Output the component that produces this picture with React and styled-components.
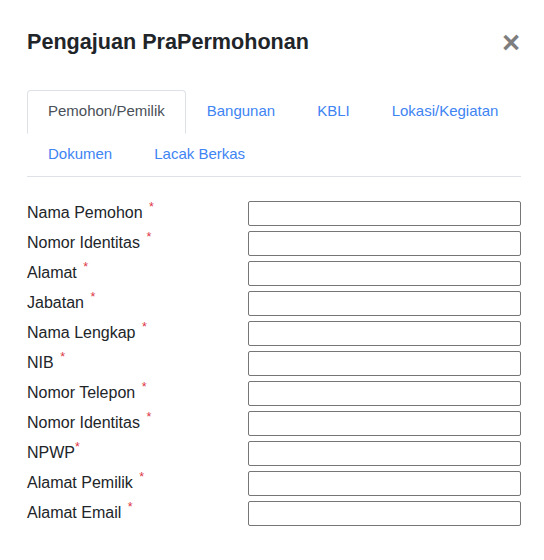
import { useState } from "react";
import styled, { createGlobalStyle } from "styled-components";

const GlobalStyle = createGlobalStyle`
  body {
    margin: 0;
    background: #fff;
    font-family: "Liberation Sans", Arial, sans-serif;
    color: #212529;
  }
`;

const Modal = styled.div`
  width: 544px;
  height: 560px;
  box-sizing: border-box;
  padding: 0 23px 0 27px;
  background: #fff;
`;

const Header = styled.div`
  display: flex;
  align-items: center;
  justify-content: space-between;
  height: 84px;
  box-sizing: border-box;
`;

const Title = styled.h5`
  margin: 0;
  font-size: 21.6px;
  font-weight: 700;
  line-height: 1.5;
  color: #212529;
`;

const CloseButton = styled.button`
  border: 0;
  background: transparent;
  padding: 0;
  margin-right: 1px;
  font-family: "Liberation Sans", Arial, sans-serif;
  font-size: 31px;
  font-weight: 700;
  line-height: 1;
  color: #000;
  opacity: 0.5;
  text-shadow: 0 1px 0 #fff;
  cursor: pointer;
`;

const Tabs = styled.ul`
  display: flex;
  flex-wrap: wrap;
  list-style: none;
  margin: 6px 0 0;
  padding: 0;
  border-bottom: 1px solid #dee2e6;
`;

const TabLink = styled.a`
  display: block;
  margin-bottom: -1px;
  padding: 9px 20px 11px;
  font-size: 15px;
  line-height: 22px;
  text-decoration: none;
  cursor: pointer;
  border: 1px solid transparent;
  border-top-left-radius: 4px;
  border-top-right-radius: 4px;
  color: ${(p) => (p.$active ? "#495057" : "#3e84f3")};
  background: ${(p) => (p.$active ? "#fff" : "transparent")};
  border-color: ${(p) =>
    p.$active ? "#dee2e6 #dee2e6 #fff" : "transparent"};
`;

const Form = styled.div`
  display: flex;
  flex-direction: column;
  gap: 5px;
  padding-top: 24px;
`;

const Row = styled.div`
  display: grid;
  grid-template-columns: 221px 1fr;
  align-items: center;
  height: 25px;
`;

const Label = styled.label`
  font-size: 16px;
  line-height: 20px;
  color: #212529;
  margin-top: -5px;
`;

const Required = styled.sup`
  color: #dc3545;
  font-size: 12.5px;
  margin-left: ${(p) => (p.$tight ? "0" : "2px")};
  position: relative;
  top: -1px;
`;

const Input = styled.input`
  box-sizing: border-box;
  width: 273px;
  height: 25px;
  border: 1px solid #767676;
  border-radius: 2px;
  background: #fff;
  padding: 1px 4px;
  font-family: inherit;
  font-size: 14px;
`;

const tabs = [
  "Pemohon/Pemilik",
  "Bangunan",
  "KBLI",
  "Lokasi/Kegiatan",
  "Dokumen",
  "Lacak Berkas",
];

const fields = [
  { label: "Nama Pemohon" },
  { label: "Nomor Identitas" },
  { label: "Alamat" },
  { label: "Jabatan" },
  { label: "Nama Lengkap" },
  { label: "NIB" },
  { label: "Nomor Telepon" },
  { label: "Nomor Identitas" },
  { label: "NPWP", tight: true },
  { label: "Alamat Pemilik" },
  { label: "Alamat Email" },
];

export default function App() {
  const [active, setActive] = useState(0);

  return (
    <>
      <GlobalStyle />
      <Modal>
        <Header>
          <Title>Pengajuan PraPermohonan</Title>
          <CloseButton aria-label="Close">×</CloseButton>
        </Header>
        <Tabs>
          {tabs.map((tab, i) => (
            <li key={tab}>
              <TabLink $active={i === active} onClick={() => setActive(i)}>
                {tab}
              </TabLink>
            </li>
          ))}
        </Tabs>
        <Form>
          {fields.map((f, i) => (
            <Row key={i}>
              <Label>
                {f.label}
                {!f.tight && " "}
                <Required $tight={f.tight}>*</Required>
              </Label>
              <Input type="text" />
            </Row>
          ))}
        </Form>
      </Modal>
    </>
  );
}
